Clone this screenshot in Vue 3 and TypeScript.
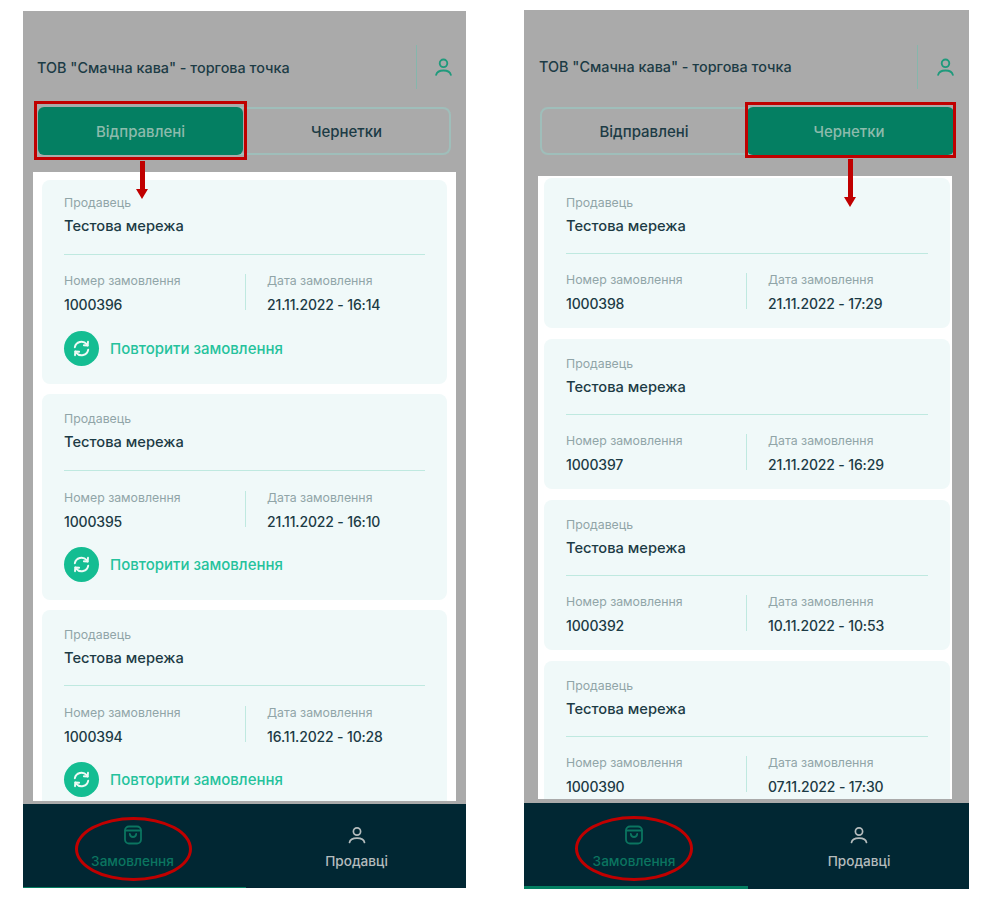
<template>
  <div class="page">
    <section v-for="phone in phones" :key="phone.id" class="phone" :class="phone.id">
      <header class="top-bar">
        <span class="shop-name">ТОВ "Смачна кава" - торгова точка</span>
        <span class="top-icon">
          <svg width="21" height="21" viewBox="0 0 20 20" fill="none" stroke="#1f9a7c" stroke-width="1.8" stroke-linecap="round">
            <circle cx="10" cy="6" r="3.6" />
            <path d="M3 17c.6-2.800 3.200-4.200 7-4.200s6.400 1.400 7 4.200" />
          </svg>
        </span>
      </header>

      <div class="tabs">
        <div class="tab" :class="{ active: phone.activeTab === 0 }">Відправлені</div>
        <div class="tab" :class="{ active: phone.activeTab === 1 }">Чернетки</div>
      </div>

      <div class="panel">
        <article v-for="order in phone.orders" :key="order.number" class="card">
          <div class="label">Продавець</div>
          <div class="seller">Тестова мережа</div>
          <div class="meta">
            <div class="meta-col">
              <div class="label">Номер замовлення</div>
              <div class="value">{{ order.number }}</div>
            </div>
            <div class="meta-divider"></div>
            <div class="meta-col second">
              <div class="label">Дата замовлення</div>
              <div class="value">{{ order.date }}</div>
            </div>
          </div>
          <div v-if="phone.repeat" class="repeat">
            <span class="repeat-icon">
              <svg width="19" height="19" viewBox="0 0 19 19" fill="none" stroke="#eefaf6" stroke-width="1.9" stroke-linecap="round" stroke-linejoin="round">
                <path d="M2.800 8.300A6.800 6.800 0 0 1 14.700 5.200l1 1.300" />
                <path d="M16 2.800 15.700 6.500l-3.800-.3" />
                <path d="M16.200 10.700A6.800 6.800 0 0 1 4.300 13.800l-1-1.300" />
                <path d="M3 16.200 3.300 12.500l3.800.3" />
              </svg>
            </span>
            <span class="repeat-text">Повторити замовлення</span>
          </div>
        </article>
      </div>

      <nav class="bottom-nav">
        <div class="nav-item current">
          <svg width="20" height="20" viewBox="0 0 20 20" fill="none" stroke="#0b7560" stroke-width="1.8" stroke-linecap="round" stroke-linejoin="round">
            <rect x="2" y="1.500" width="16" height="17" rx="4" />
            <path d="M2.300 5.500h15.400" />
            <path d="M6.800 9c.3 2 1.500 3 3.200 3s2.900-1 3.200-3" />
          </svg>
          <span>Замовлення</span>
        </div>
        <div class="nav-item">
          <svg width="20" height="20" viewBox="0 0 20 20" fill="none" stroke="#b5bcbd" stroke-width="1.700" stroke-linecap="round">
            <circle cx="10" cy="6.500" r="3.600" />
            <path d="M2.500 17.500c.6-3 3.400-4.300 7.500-4.300s6.900 1.300 7.500 4.300" />
          </svg>
          <span>Продавці</span>
        </div>
      </nav>

      <!-- red marks drawn over the screenshot -->
      <div class="mark-box"></div>
      <div class="mark-arrow"></div>
      <div class="mark-ring"></div>
    </section>
  </div>
</template>

<script setup lang="ts">
interface Order {
  number: string
  date: string
}

interface Phone {
  id: string
  activeTab: number
  repeat: boolean
  orders: Order[]
}

const phones: Phone[] = [
  {
    id: 'sent',
    activeTab: 0,
    repeat: true,
    orders: [
      { number: '1000396', date: '21.11.2022 - 16:14' },
      { number: '1000395', date: '21.11.2022 - 16:10' },
      { number: '1000394', date: '16.11.2022 - 10:28' },
    ],
  },
  {
    id: 'drafts',
    activeTab: 1,
    repeat: false,
    orders: [
      { number: '1000398', date: '21.11.2022 - 17:29' },
      { number: '1000397', date: '21.11.2022 - 16:29' },
      { number: '1000392', date: '10.11.2022 - 10:53' },
      { number: '1000390', date: '07.11.2022 - 17:30' },
    ],
  },
]
</script>

<style>
html,
body {
  background: #fff;
}
</style>

<style scoped>
.page {
  display: flex;
  align-items: flex-start;
  gap: 58px;
  padding: 10px 0 0 23px;
  font-family: Inter, "Noto Sans", sans-serif;
}

.phone {
  position: relative;
  display: flex;
  flex-direction: column;
  width: 443px;
  height: 877px;
  margin-top: 1px;
  background: #aaaaaa;
}

.phone.drafts {
  width: 445px;
  height: 879px;
  margin-top: 0;
}

/* top bar */
.top-bar {
  display: flex;
  align-items: center;
  justify-content: space-between;
  height: 44px;
  margin: 34px 0 0;
  padding: 0 12px 0 15px;
}

.phone.drafts .top-bar {
  margin-top: 35px;
  padding: 0 13px 0 16px;
}

.shop-name {
  font-size: 14.4px;
  font-weight: 500;
  color: #1c3b45;
  margin-left: -1px;
}

.phone.drafts .shop-name {
  padding-bottom: 2px;
}

.top-icon {
  display: flex;
  align-items: center;
  height: 44px;
  padding-left: 16px;
  border-left: 1px solid #86b6ac;
}

.drafts .top-icon {
  padding-left: 17px;
}

/* tabs */
.tabs {
  display: flex;
  height: 48px;
  margin: 18px 15px 0;
  box-sizing: border-box;
  border: 2px solid #9fbeba;
  border-radius: 8px;
}

.phone.drafts .tabs {
  margin: 18px 15px 0 16px;
}

.tab {
  flex: 1;
  display: flex;
  align-items: center;
  justify-content: center;
  border-radius: 6px;
  font-size: 15px;
  font-weight: 500;
  color: #1c3b45;
}

.sent .tab:last-child {
  padding-left: 4px;
}

.drafts .tab {
  padding-right: 3px;
}

.tab.active {
  margin: -2px;
  background: #047f62;
  color: #8dbbac;
}

.sent .tab.active {
  margin-right: -3px;
}

/* list */
.panel {
  flex: 1;
  min-height: 0;
  display: flex;
  flex-direction: column;
  gap: 10px;
  margin: 17px 10px 3px;
  padding: 8px 9px 0;
  overflow: hidden;
  background: #fff;
}

.phone.drafts .panel {
  gap: 11px;
  margin: 21px 17px 4px 14px;
  padding: 2px 2px 0 6px;
}

.card {
  flex-shrink: 0;
  height: 206px;
  padding: 17px 22px 0;
  box-sizing: border-box;
  border-radius: 8px;
  background: #f0f9f9;
}

.sent .card:first-child {
  height: 204px;
  padding-top: 15px;
}

.sent .card:first-child .meta {
  margin-top: 18px;
}

.sent .card:first-child .repeat {
  margin-top: 18px;
}

.sent .card:last-child .seller {
  padding-bottom: 18px;
}

.phone.drafts .card {
  height: 150px;
  padding-top: 17px;
}

.label {
  font-size: 12.3px;
  line-height: 16px;
  color: #90a5a8;
}

.seller {
  margin-top: 7px;
  padding-bottom: 19px;
  border-bottom: 1.5px solid #bfe9e0;
  font-size: 14.7px;
  font-weight: 500;
  line-height: 17px;
  color: #1c3b45;
}

.drafts .seller {
  padding-bottom: 18px;
}

.meta {
  display: flex;
  margin-top: 19px;
}

.drafts .meta {
  margin-top: 18px;
}

.meta-col {
  flex: none;
  width: 180px;
}

.meta-col.second {
  padding-left: 21px;
}

.meta-divider {
  flex: none;
  width: 1px;
  height: 36px;
  margin: 1px 0 0 1px;
  background: #bfe9e0;
}

.drafts .meta-divider {
  margin-left: 0;
}

.value {
  margin-top: 7px;
  font-size: 14px;
  font-weight: 500;
  line-height: 17px;
  letter-spacing: -0.15px;
  color: #1c3b45;
}

.repeat {
  display: flex;
  align-items: center;
  gap: 11px;
  margin-top: 17px;
}

.repeat-icon {
  display: flex;
  align-items: center;
  justify-content: center;
  width: 35px;
  height: 35px;
  border-radius: 50%;
  background: #14bd92;
}

.repeat-text {
  font-size: 15px;
  font-weight: 500;
  color: #25c29c;
}

/* bottom nav */
.bottom-nav {
  position: relative;
  display: flex;
  height: 84px;
  background: #012733;
}

.drafts .bottom-nav {
  height: 86px;
}

.nav-item {
  flex: 1;
  display: flex;
  flex-direction: column;
  align-items: center;
  gap: 8px;
  padding: 21px 0 0 1px;
  box-sizing: border-box;
  font-size: 13.6px;
  line-height: 16px;
  font-weight: 500;
  color: #b5bcbd;
}

.drafts .nav-item {
  padding-top: 22px;
}

.nav-item.current {
  padding-left: 0;
  padding-right: 4px;
  color: #0b7560;
  border-bottom: 3px solid #047f62;
}

.sent .nav-item.current {
  border-bottom-width: 1px;
}

/* annotations */
.mark-box,
.mark-ring,
.mark-arrow {
  position: absolute;
}

.mark-box {
  left: 11px;
  top: 90px;
  width: 213px;
  height: 59px;
  box-sizing: border-box;
  border: 3px solid #c00000;
}

.drafts .mark-box {
  left: 221px;
  top: 92px;
  width: 211px;
  height: 56px;
}

.mark-arrow {
  left: 117px;
  top: 150px;
  width: 5px;
  height: 28px;
  background: #c00000;
}

.mark-arrow::after {
  content: '';
  position: absolute;
  left: -4px;
  bottom: -10px;
  border-left: 6.500px solid transparent;
  border-right: 6.500px solid transparent;
  border-top: 10px solid #c00000;
}

.drafts .mark-arrow {
  left: 324px;
  top: 149px;
  height: 38px;
}

.mark-ring {
  left: 52px;
  top: 806px;
  width: 117px;
  height: 64px;
  box-sizing: border-box;
  border: 3px solid #c00000;
  border-radius: 50%;
}

.drafts .mark-ring {
  left: 51px;
  width: 118px;
  height: 65px;
}
</style>
